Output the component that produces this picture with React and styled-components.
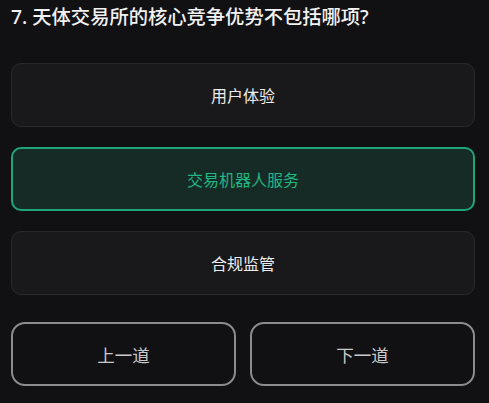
import React from 'react';
import styled, { createGlobalStyle } from 'styled-components';

const GlobalStyle = createGlobalStyle`
  html, body {
    margin: 0;
    padding: 0;
    background: #111113;
  }
  body {
    font-family: "Noto Sans", "Noto Sans CJK SC", sans-serif;
  }
`;

const Page = styled.div`
  width: 489px;
  height: 403px;
  box-sizing: border-box;
  padding: 4px 14px 0 11px;
  display: flex;
  flex-direction: column;
  overflow: hidden;
`;

const Question = styled.h2`
  margin: 0;
  font-size: 19.3px;
  line-height: 26px;
  font-weight: 500;
  color: #f2f2f3;
`;

const Options = styled.div`
  display: flex;
  flex-direction: column;
  gap: 20px;
  margin-top: 33px;
`;

const Option = styled.div`
  height: 64px;
  box-sizing: border-box;
  border-radius: 10px;
  display: flex;
  align-items: center;
  justify-content: center;
  font-size: 16px;
  border: ${({ $selected }) => ($selected ? '2px solid #1ea67a' : '1px solid #29292b')};
  background: ${({ $selected }) => ($selected ? '#172b26' : '#19191b')};
  color: ${({ $selected }) => ($selected ? '#1fb884' : '#ececec')};
`;

const Nav = styled.div`
  display: grid;
  grid-template-columns: 1fr 1fr;
  gap: 14px;
  margin-top: 27px;
`;

const NavButton = styled.button`
  height: 64px;
  border-radius: 14px;
  border: 2px solid #8c8c8e;
  background: transparent;
  color: #c9c9cb;
  font-family: inherit;
  font-size: 17.5px;
`;

const options = ['用户体验', '交易机器人服务', '合规监管'];

export default function App() {
  const selected = 1;
  return (
    <>
      <GlobalStyle />
      <Page>
        <Question>7. 天体交易所的核心竞争优势不包括哪项?</Question>
        <Options>
          {options.map((o, i) => (
            <Option key={o} $selected={i === selected}>{o}</Option>
          ))}
        </Options>
        <Nav>
          <NavButton>上一道</NavButton>
          <NavButton>下一道</NavButton>
        </Nav>
      </Page>
    </>
  );
}
